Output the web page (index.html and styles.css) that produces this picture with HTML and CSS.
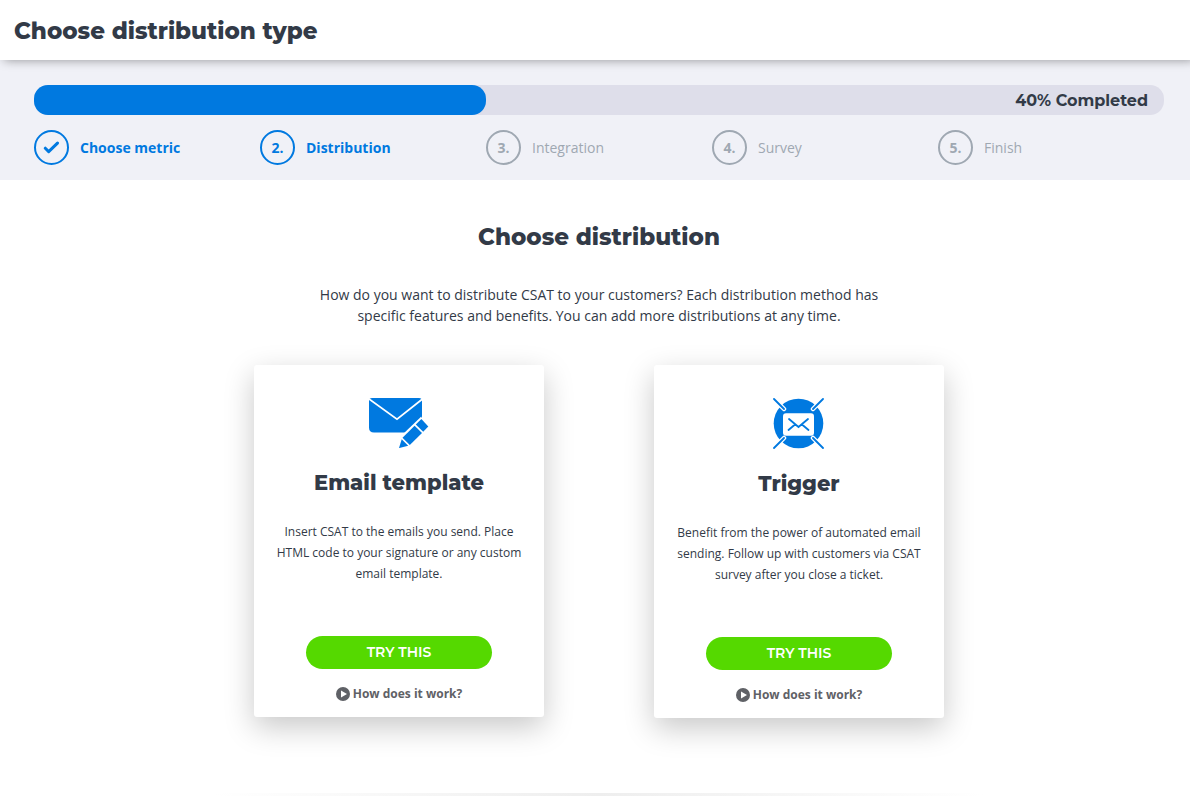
FILE: index.html
```html
<!DOCTYPE html>
<html lang="en">
<head>
  <meta charset="UTF-8">
  <meta name="viewport" content="width=device-width, initial-scale=1.0">
  <title>Choose distribution type</title>
  <link rel="stylesheet" href="styles.css">
</head>
<body>

  <header class="page-header">
    <h1>Choose distribution type</h1>
  </header>

  <section class="wizard">
    <div class="progress" role="progressbar" aria-valuenow="40" aria-valuemin="0" aria-valuemax="100">
      <div class="progress-bar" style="width: 40%"></div>
      <span class="progress-text">40% Completed</span>
    </div>
    <ol class="steps">
      <li class="step active">
        <span class="step-number">
          <svg width="17" height="13" viewBox="0 0 17 13" fill="none" stroke="currentColor" stroke-width="3" stroke-linecap="round" stroke-linejoin="round"><path d="M2.3 7.2L5.7 10.6L14.5 2.1"/></svg>
        </span>
        <span>Choose metric</span>
      </li>
      <li class="step active"><span class="step-number">2.</span><span>Distribution</span></li>
      <li class="step"><span class="step-number">3.</span><span>Integration</span></li>
      <li class="step"><span class="step-number">4.</span><span>Survey</span></li>
      <li class="step"><span class="step-number">5.</span><span>Finish</span></li>
    </ol>
  </section>

  <main class="content">
    <h2>Choose distribution</h2>
    <p class="intro">How do you want to distribute CSAT to your customers? Each distribution method has specific features and benefits. You can add more distributions at any time.</p>

    <div class="cards">
      <div class="card">
        <!-- envelope with pencil -->
        <svg class="card-icon" width="60" height="50" viewBox="0 0 60 50">
          <path fill="#0079e0" d="M3 0H50Q53 0 53 3V19L36.500 34.500H5Q0 34.500 0 29.500V3Q0 0 3 0Z"/>
          <path fill="none" stroke="#fff" stroke-width="1.700" d="M0 1L28 21.200L53.500 1"/>
          <path fill="#fff" d="M52.300 18.500L33 37L34 41L52 24Z"/>
          <path fill="#0079e0" d="M52.400 21L59.300 28.600L54.200 33.800L46.800 26.500Z"/>
          <path fill="#0079e0" d="M45.600 27.700L53 35L40.800 47L33.500 39.800Z"/>
          <path fill="#0079e0" d="M32.700 41.300L39.200 47.800L30 50.100Z"/>
        </svg>
        <h3>Email template</h3>
        <p>Insert CSAT to the emails you send. Place HTML code to your signature or any custom email template.</p>
        <button type="button" class="btn">TRY THIS</button>
        <a href="#" class="how-link">
          <svg width="14" height="14" viewBox="0 0 14 14"><circle cx="7" cy="7" r="7" fill="#5f6166"/><path fill="#fff" d="M5 3.600L11 7L5 10.400Z"/></svg>
          How does it work?
        </a>
      </div>

      <div class="card">
        <!-- envelope in a target -->
        <svg class="card-icon" width="52" height="51" viewBox="0 0 52 51">
          <circle cx="25.500" cy="25.500" r="24.800" fill="#0079e0"/>
          <g fill="none" stroke-linecap="round">
            <path stroke="#fff" stroke-width="4.500" d="M1 1L11 11M50 1L40 11M1 50L11 40M50 50L40 40"/>
            <path stroke="#0079e0" stroke-width="1.800" d="M1 1L11 11M50 1L40 11M1 50L11 40M50 50L40 40"/>
          </g>
          <rect x="10" y="15.300" width="31" height="22.500" rx="3" fill="#fff"/>
          <path fill="none" stroke="#0079e0" stroke-width="1.800" stroke-linecap="round" d="M16 21L25.500 29L35 21M15.500 32L22 26.500M35.500 32L29 26.500"/>
        </svg>
        <h3>Trigger</h3>
        <p>Benefit from the power of automated email sending. Follow up with customers via CSAT survey after you close a ticket.</p>
        <button type="button" class="btn">TRY THIS</button>
        <a href="#" class="how-link">
          <svg width="14" height="14" viewBox="0 0 14 14"><circle cx="7" cy="7" r="7" fill="#5f6166"/><path fill="#fff" d="M5 3.600L11 7L5 10.400Z"/></svg>
          How does it work?
        </a>
      </div>
    </div>

    <hr class="divider">
  </main>

</body>
</html>
```

FILE: styles.css
```css
* {
  box-sizing: border-box;
}

body {
  margin: 0;
  font-family: 'Open Sans', sans-serif;
  font-size: 14px;
  line-height: 21px;
  color: #323a47;
  background: #fff;
}

h1, h2, h3 {
  margin: 0;
  font-family: Montserrat, Inter, sans-serif;
  font-weight: 800;
}

.page-header {
  position: relative;
  padding: 16px 14px 14px;
  background: #fff;
  box-shadow: 4px 0 10px rgba(0, 0, 0, 0.4);
}

h1, h2 {
  font-size: 23px;
  line-height: 30px;
}

/* wizard progress */
.wizard {
  padding: 25px 26px 15px 34px;
  background: #f0f1f7;
}

.progress {
  position: relative;
  height: 30px;
  border-radius: 14px;
  background: #dedeea;
}

.progress-bar {
  height: 100%;
  border-radius: 14px;
  background: #0079e0;
}

.progress-text {
  position: absolute;
  top: 0;
  right: 16px;
  font-family: Montserrat, Inter, sans-serif;
  font-size: 16px;
  font-weight: 700;
  line-height: 32px;
}

.steps {
  display: grid;
  grid-template-columns: repeat(5, 1fr);
  margin: 15px 0 0;
  padding: 0;
  list-style: none;
}

.step {
  display: flex;
  align-items: center;
  gap: 11px;
  color: #9fa8b2;
}

.step.active {
  color: #0079e0;
  font-weight: 700;
}

.step-number {
  display: flex;
  align-items: center;
  justify-content: center;
  width: 35px;
  height: 35px;
  border: 2px solid currentColor;
  border-radius: 50%;
  font-weight: 700;
}

/* content */
.content {
  padding: 42px 26px 10px 34px;
  text-align: center;
}

.intro {
  max-width: 580px;
  margin: 32px auto 39px;
}

.cards {
  display: flex;
  flex-wrap: wrap;
  align-items: flex-start;
  justify-content: center;
  gap: 40px 110px;
}

.card {
  display: flex;
  flex-direction: column;
  align-items: center;
  width: 290px;
  padding: 33px 20px 13px;
  border-radius: 3px;
  background: #fff;
  box-shadow: 0 10px 30px rgba(0, 0, 0, 0.22);
}

.card h3 {
  margin-top: 20px;
  font-size: 21px;
  line-height: 30px;
}

.card p {
  margin: 23px 0 52px;
  font-size: 12px;
}

.btn {
  width: 186px;
  height: 33px;
  padding: 0 0 2px;
  border: none;
  border-radius: 17px;
  background: #55d900;
  color: #fff;
  font-family: Montserrat, Inter, sans-serif;
  font-size: 14px;
  font-weight: 600;
  cursor: pointer;
}

.btn:hover {
  background: #4cc400;
}

.how-link {
  display: flex;
  align-items: center;
  gap: 3px;
  margin-top: 14px;
  color: #5f6166;
  font-size: 12px;
  font-weight: 700;
  text-decoration: none;
}

.divider {
  max-width: 770px;
  height: 3px;
  margin: 75px auto 0;
  border: none;
  background: linear-gradient(to right, transparent, #eee, transparent);
}
```
